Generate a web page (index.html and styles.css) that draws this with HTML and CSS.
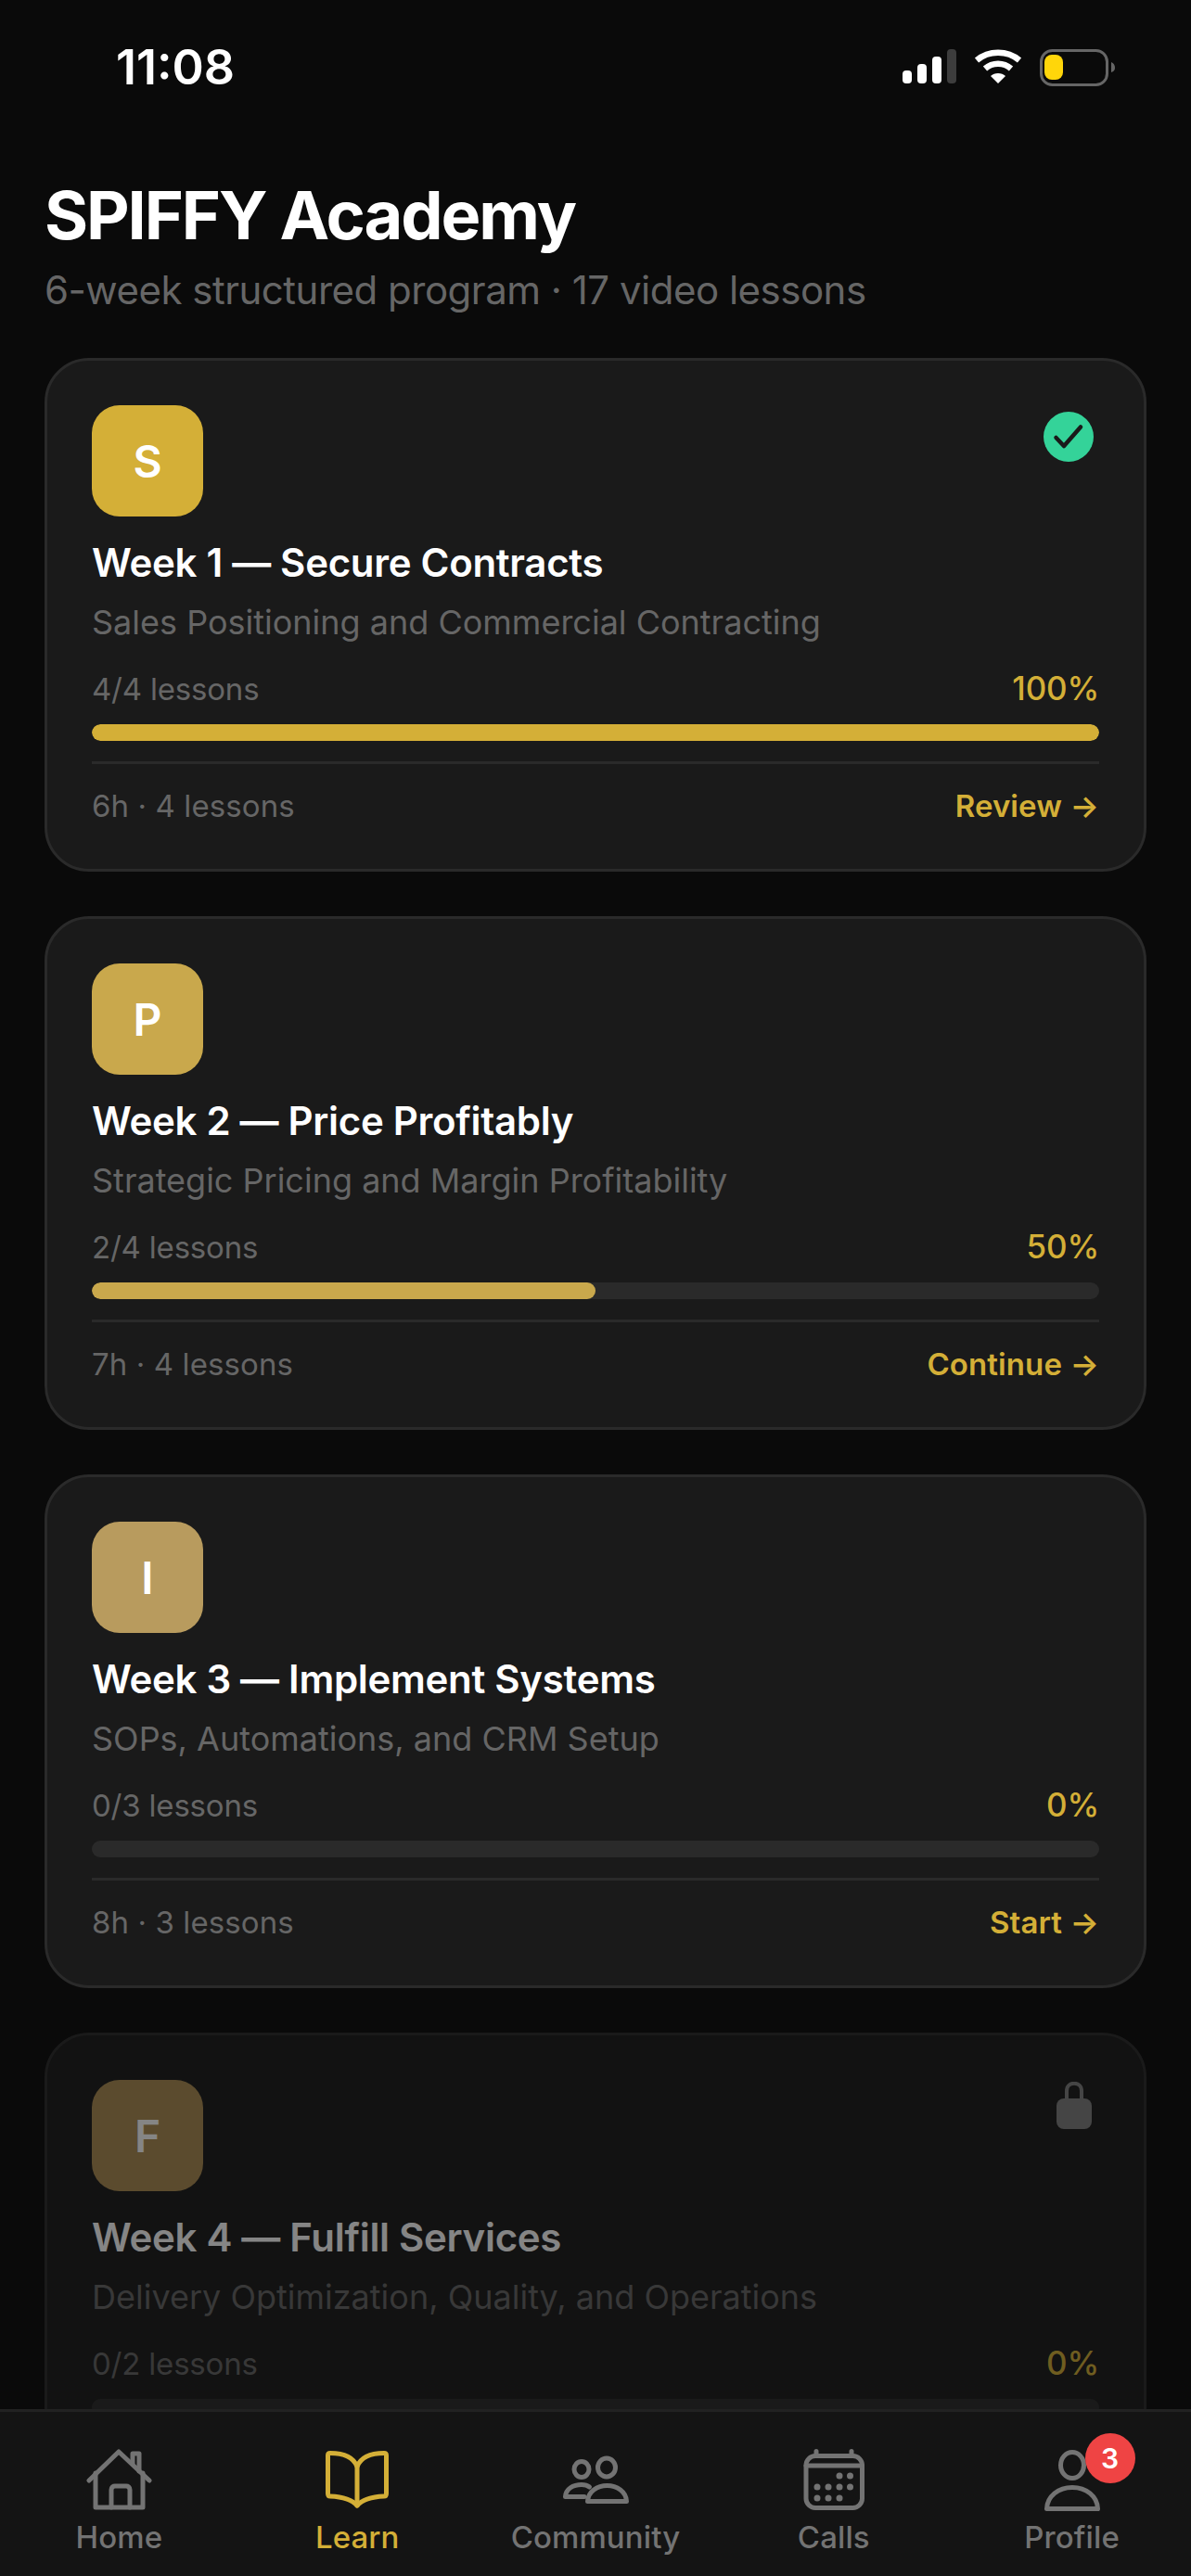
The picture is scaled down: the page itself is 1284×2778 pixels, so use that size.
FILE: index.html
```html
<!DOCTYPE html>
<html lang="en">
<head>
  <meta charset="UTF-8" />
  <meta name="viewport" content="width=device-width, initial-scale=1.0" />
  <title>SPIFFY Academy</title>
  <link rel="stylesheet" href="styles.css">
</head>
<body>
  <div class="status-bar">
    <span class="time">11:08</span>
    <div class="status-icons">
      <svg width="58" height="38" viewBox="0 0 58 38">
        <rect x="0" y="23" width="10" height="14" rx="4" fill="#fff"/>
        <rect x="16" y="16" width="10" height="21" rx="4" fill="#fff"/>
        <rect x="32" y="8" width="10" height="29" rx="4" fill="#fff"/>
        <rect x="48" y="0" width="10" height="37" rx="4" fill="#3d3d3d"/>
      </svg>
      <svg width="52" height="38" viewBox="0 0 52 38">
        <path d="M3 12 C16 1 36 1 49 12" fill="none" stroke="#fff" stroke-width="6.5"/>
        <path d="M12 21 C20 14 32 14 40 21" fill="none" stroke="#fff" stroke-width="6.5"/>
        <path d="M18 29 C22 25 30 25 34 29 L26 37 Z" fill="#fff"/>
      </svg>
      <svg width="81" height="40" viewBox="0 0 81 40">
        <rect x="1.5" y="1.5" width="71" height="37" rx="12" fill="none" stroke="#666" stroke-width="3"/>
        <rect x="5" y="6" width="20" height="27" rx="8" fill="#ffd60a"/>
        <path d="M77 14 C79.500 15 81 17 81 20 C81 23 79.500 24 77 25 Z" fill="#666"/>
      </svg>
    </div>
  </div>

  <main class="content">
    <h1 class="page-title">SPIFFY Academy</h1>
    <p class="page-sub">6-week structured program · 17 video lessons</p>

    <section class="week-card">
      <div class="card-top">
        <div class="week-icon icon-s">S</div>
        <svg class="done-icon" width="54" height="54" viewBox="0 0 54 54">
          <circle cx="27" cy="27" r="27" fill="#34d399"/>
          <path d="M13.500 28 L22 37 L40 16.500" fill="none" stroke="#1a1a1a" stroke-width="4.500" stroke-linecap="round" stroke-linejoin="round"/>
        </svg>
      </div>
      <h2 class="week-title">Week 1 — Secure Contracts</h2>
      <p class="week-desc">Sales Positioning and Commercial Contracting</p>
      <div class="progress-row"><span>4/4 lessons</span><span class="pct">100%</span></div>
      <div class="bar"><div class="bar-fill" style="width: 100%"></div></div>
      <div class="card-foot"><span>6h · 4 lessons</span><span class="action">Review →</span></div>
    </section>

    <section class="week-card">
      <div class="card-top">
        <div class="week-icon icon-p">P</div>
      </div>
      <h2 class="week-title">Week 2 — Price Profitably</h2>
      <p class="week-desc">Strategic Pricing and Margin Profitability</p>
      <div class="progress-row"><span>2/4 lessons</span><span class="pct">50%</span></div>
      <div class="bar"><div class="bar-fill fill-p" style="width: 50%"></div></div>
      <div class="card-foot"><span>7h · 4 lessons</span><span class="action">Continue →</span></div>
    </section>

    <section class="week-card">
      <div class="card-top">
        <div class="week-icon icon-i">I</div>
      </div>
      <h2 class="week-title">Week 3 — Implement Systems</h2>
      <p class="week-desc">SOPs, Automations, and CRM Setup</p>
      <div class="progress-row"><span>0/3 lessons</span><span class="pct">0%</span></div>
      <div class="bar"><div class="bar-fill" style="width: 0%"></div></div>
      <div class="card-foot"><span>8h · 3 lessons</span><span class="action">Start →</span></div>
    </section>

    <section class="week-card locked">
      <div class="card-top">
        <div class="week-icon icon-f">F</div>
        <svg class="lock-icon" width="38" height="51" viewBox="0 0 38 51">
          <path d="M11 20 V10 C11 -1 27 -1 27 10 V20" fill="none" stroke="#808080" stroke-width="4"/>
          <rect x="0" y="18" width="38" height="33" rx="8" fill="#808080"/>
        </svg>
      </div>
      <h2 class="week-title">Week 4 — Fulfill Services</h2>
      <p class="week-desc">Delivery Optimization, Quality, and Operations</p>
      <div class="progress-row"><span>0/2 lessons</span><span class="pct">0%</span></div>
      <div class="bar"><div class="bar-fill" style="width: 0%"></div></div>
    </section>
  </main>

  <nav class="tab-bar">
    <div class="tab">
      <svg width="72" height="72" viewBox="0 0 72 72" fill="none" stroke="#737373" stroke-width="5" stroke-linecap="round" stroke-linejoin="round">
        <path d="M4 37 L36 6 L69 37"/>
        <path d="M51 19 V8 H58 V27"/>
        <path d="M11 29 V66 H62 V29"/>
        <path d="M28 66 V47 C28 44 30 43 32 43 H44 C46 43 48 44 48 47 V66"/>
      </svg>
      <span>Home</span>
    </div>
    <div class="tab active">
      <svg width="72" height="72" viewBox="0 0 72 72" fill="none" stroke="#d4af37" stroke-width="5" stroke-linecap="round" stroke-linejoin="round">
        <path d="M36 22 C32 12 21 7.500 7 7.500 Q4.500 7.500 4.500 10 V51 Q4.500 54 7 54 C19 54.500 30 57 36 64 C42 57 53 54.500 65 54 Q67.500 54 67.500 51 V10 Q67.500 7.500 65 7.500 C51 7.500 40 12 36 22 Z"/>
        <path d="M36 22 V64"/>
      </svg>
      <span>Learn</span>
    </div>
    <div class="tab">
      <svg width="72" height="72" viewBox="0 0 72 72" fill="none" stroke="#737373" stroke-width="5" stroke-linecap="round" stroke-linejoin="round">
        <ellipse cx="21" cy="25" rx="8" ry="8.500"/>
        <ellipse cx="48" cy="23" rx="9.500" ry="10"/>
        <path d="M24 54.500 H3.500 C4 46 12 41.500 21 41.500 C24 41.500 27 42 29.500 44"/>
        <path d="M27.500 59.500 C28 49 38 42.500 48.500 42.500 C59 42.500 69 49 69.500 59.500 Z"/>
      </svg>
      <span>Community</span>
    </div>
    <div class="tab">
      <svg width="72" height="72" viewBox="0 0 72 72" fill="none" stroke="#737373" stroke-width="5" stroke-linecap="round" stroke-linejoin="round">
        <rect x="6" y="10.500" width="60.500" height="56" rx="10"/>
        <path d="M6 21 H66.500"/>
        <path d="M17 5.500 V9 M55 5.500 V9"/>
        <g fill="#737373" stroke="none">
          <circle cx="42" cy="32" r="3.500"/><circle cx="53.500" cy="32" r="3.500"/>
          <circle cx="18" cy="44" r="3.500"/><circle cx="30" cy="44" r="3.500"/><circle cx="42" cy="44" r="3.500"/><circle cx="53.500" cy="44" r="3.500"/>
          <circle cx="18" cy="56" r="3.500"/><circle cx="30" cy="56" r="3.500"/><circle cx="42" cy="56" r="3.500"/>
        </g>
      </svg>
      <span>Calls</span>
    </div>
    <div class="tab">
      <div class="tab-icon-wrap">
        <svg width="72" height="72" viewBox="0 0 72 72" fill="none" stroke="#737373" stroke-width="5" stroke-linecap="round" stroke-linejoin="round">
          <ellipse cx="36" cy="20.500" rx="12.500" ry="14"/>
          <path d="M8.500 67.500 C9 54 21 44.500 36 44.500 C51 44.500 63 54 63.500 67.500 Z"/>
        </svg>
        <span class="badge">3</span>
      </div>
      <span>Profile</span>
    </div>
  </nav>
</body>
</html>
```

FILE: styles.css
```css
* {
  box-sizing: border-box;
}
html, body {
  margin: 0;
  height: 100%;
}
body {
  width: 1284px;
  height: 2778px;
  background: #0a0a0a;
  color: #fff;
  font-family: Inter, "Noto Sans", sans-serif;
  display: flex;
  flex-direction: column;
  overflow: hidden;
}
.status-bar {
  height: 187px;
  flex-shrink: 0;
  padding: 44px 82px 0 125px;
  display: flex;
  justify-content: space-between;
  align-items: flex-start;
}
.time {
  font-size: 52px;
  line-height: 58px;
  font-weight: 600;
}
.status-icons {
  display: flex;
  align-items: flex-start;
  gap: 19px;
  padding-top: 9px;
}
.status-icons svg {
  display: block;
}
.content {
  flex: 1;
  min-height: 0;
  overflow: hidden;
  padding: 0 48px;
}
.page-title {
  margin: 0;
  font-size: 72px;
  line-height: 90px;
  font-weight: 700;
  letter-spacing: -2.1px;
}
.page-sub {
  margin: 9px 0 46px;
  font-size: 42px;
  line-height: 54px;
  letter-spacing: -0.5px;
  color: #666;
}
.week-card {
  background: #1a1a1a;
  border: 3px solid #2a2a2a;
  border-radius: 48px;
  padding: 48px 48px 0;
  height: 554px;
  margin-bottom: 48px;
}
.week-card.locked {
  opacity: 0.5;
}
.card-top {
  display: flex;
  justify-content: space-between;
  align-items: flex-start;
}
.week-icon {
  width: 120px;
  height: 120px;
  border-radius: 30px;
  display: flex;
  align-items: center;
  justify-content: center;
  font-size: 48px;
  font-weight: 600;
  color: #fff;
}
.icon-s { background: #d4af37; }
.icon-p { background: #c9a84c; }
.icon-i { background: #b89b5e; }
.icon-f { background: #ab8c52; }
.done-icon {
  margin-top: 7px;
  margin-right: 6px;
}
.lock-icon {
  margin-top: 2px;
  margin-right: 8px;
}
.week-title {
  margin: 23px 0 0;
  font-size: 42px;
  line-height: 54px;
  font-weight: 600;
  letter-spacing: -0.3px;
}
.week-desc {
  margin: 10px 0 0;
  font-size: 36px;
  line-height: 54px;
  color: #666;
}
.progress-row {
  display: flex;
  justify-content: space-between;
  align-items: baseline;
  margin-top: 20px;
  font-size: 33px;
  line-height: 48px;
  letter-spacing: -0.2px;
  color: #666;
}
.pct {
  color: #d4af37;
  font-size: 35px;
  font-weight: 500;
}
.bar {
  height: 18px;
  margin-top: 14px;
  border-radius: 9px;
  background: #2a2a2a;
  overflow: hidden;
}
.bar-fill {
  height: 100%;
  background: #d4af37;
  border-radius: 9px;
}
.bar-fill.fill-p {
  background: #c9a84c;
}
.card-foot {
  display: flex;
  justify-content: space-between;
  align-items: center;
  margin-top: 22px;
  padding-top: 21px;
  border-top: 3px solid #2a2a2a;
  font-size: 33px;
  line-height: 48px;
  letter-spacing: 0.1px;
  color: #666;
}
.action {
  color: #d4af37;
  font-weight: 600;
}
.tab-bar {
  height: 180px;
  flex-shrink: 0;
  background: #141414;
  border-top: 3px solid #222;
  display: flex;
  padding-top: 37px;
}
.tab {
  flex: 1;
  display: flex;
  flex-direction: column;
  align-items: center;
  gap: 6px;
  font-size: 33px;
  line-height: 40px;
  font-weight: 500;
  letter-spacing: 0.1px;
  color: #737373;
}
.tab.active {
  color: #d4af37;
}
.tab svg {
  display: block;
}
.tab-icon-wrap {
  position: relative;
}
.badge {
  position: absolute;
  top: -14px;
  right: -32px;
  width: 54px;
  height: 54px;
  border-radius: 50%;
  background: #ef4444;
  color: #fff;
  font-size: 30px;
  line-height: 54px;
  font-weight: 600;
  text-align: center;
}
```
